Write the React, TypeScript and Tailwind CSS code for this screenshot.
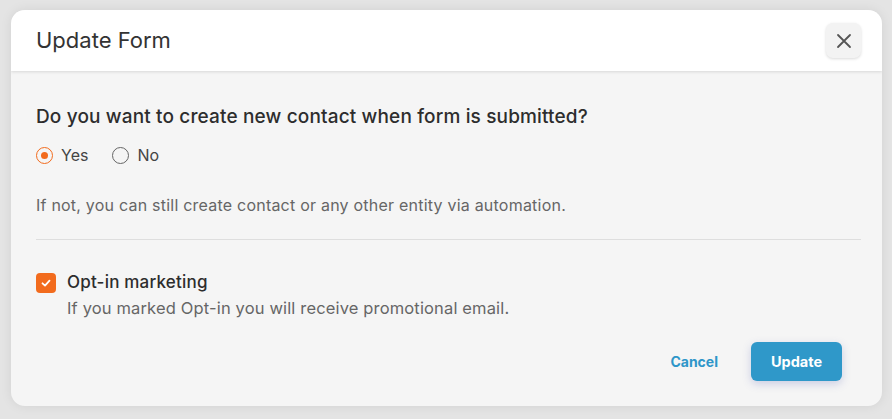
import React, { useState } from 'react';

export default function App() {
  const [create, setCreate] = useState<'yes' | 'no'>('yes');
  const [optIn, setOptIn] = useState(true);

  return (
    <div
      className="w-[892px] h-[419px] bg-[#e4e4e4] pt-[10px] pl-[11px]"
      style={{ fontFamily: 'Inter, "Noto Sans", sans-serif' }}
    >
      <div className="w-[871px] h-[396px] rounded-[14px] overflow-hidden bg-[#f5f5f5] shadow-[0_0_12px_rgba(0,0,0,0.08)] flex flex-col">
        {/* header */}
        <div className="h-[61px] bg-white flex items-center justify-between pl-[25px] pr-[21px] shadow-[0_1px_3px_rgba(0,0,0,0.12)] relative z-10">
          <h2 className="text-[22px] text-[#333]">Update Form</h2>
          <button className="w-[35px] h-[35px] rounded-[7px] bg-[#f3f3f3] shadow-[0_1px_3px_rgba(0,0,0,0.15)] flex items-center justify-center">
            <svg width="16" height="16" viewBox="0 0 16 16" fill="none" stroke="#555" strokeWidth="1.8" strokeLinecap="round">
              <path d="M2 2L14 14M14 2L2 14" />
            </svg>
          </button>
        </div>

        {/* body */}
        <div className="flex-1 pl-[25px] pr-[21px] pt-[34px] flex flex-col">
          <p className="text-[19px] font-medium text-[#2d2d2d] leading-[24px] tracking-[0.15px]">
            Do you want to create new contact when form is submitted?
          </p>
          <div className="flex items-center gap-[24px] mt-[14px] text-[16px] text-[#444]">
            <label className="flex items-center gap-[8px] cursor-pointer" onClick={() => setCreate('yes')}>
              <span className={`w-[17px] h-[17px] rounded-full border-[1.5px] flex items-center justify-center ${create === 'yes' ? 'border-[#f26b1d]' : 'border-[#666]'}`}>
                {create === 'yes' && <span className="w-[7px] h-[7px] rounded-full bg-[#f26b1d]" />}
              </span>
              Yes
            </label>
            <label className="flex items-center gap-[8px] cursor-pointer" onClick={() => setCreate('no')}>
              <span className={`w-[17px] h-[17px] rounded-full border-[1.5px] flex items-center justify-center ${create === 'no' ? 'border-[#f26b1d]' : 'border-[#666]'}`}>
                {create === 'no' && <span className="w-[7px] h-[7px] rounded-full bg-[#f26b1d]" />}
              </span>
              No
            </label>
          </div>
          <p className="mt-[27px] text-[16px] text-[#666] leading-[22px] tracking-[0.22px]">
            If not, you can still create contact or any other entity via automation.
          </p>
          <div className="mt-[23px] h-px bg-[#dedede]" />

          <div className="mt-[31px] flex gap-[11px]">
            <button
              onClick={() => setOptIn(!optIn)}
              className={`mt-[2px] w-[20px] h-[20px] rounded-[4px] flex items-center justify-center shrink-0 ${optIn ? 'bg-[#f26b1d]' : 'bg-white border border-[#999]'}`}
            >
              {optIn && (
                <svg width="12" height="12" viewBox="0 0 12 12" fill="none" stroke="white" strokeWidth="1.8" strokeLinecap="round" strokeLinejoin="round">
                  <path d="M2.5 6.3L5 8.6L9.5 3.6" />
                </svg>
              )}
            </button>
            <div>
              <p className="text-[17px] font-medium text-[#2d2d2d] leading-[22px] tracking-[0.2px]">Opt-in marketing</p>
              <p className="mt-[4px] text-[16.5px] text-[#666] leading-[22px] tracking-[0.15px]">
                If you marked Opt-in you will receive promotional email.
              </p>
            </div>
          </div>

          <div className="mt-auto mb-[25px] flex justify-end items-center gap-[33px] pr-[19px]">
            <button className="text-[14px] font-bold text-[#2e96c9]">Cancel</button>
            <button className="w-[91px] h-[39px] rounded-[6px] bg-[#2f98c9] text-white text-[14.5px] font-bold shadow-[0_3px_8px_rgba(80,90,180,0.25)]">
              Update
            </button>
          </div>
        </div>
      </div>
    </div>
  );
}
